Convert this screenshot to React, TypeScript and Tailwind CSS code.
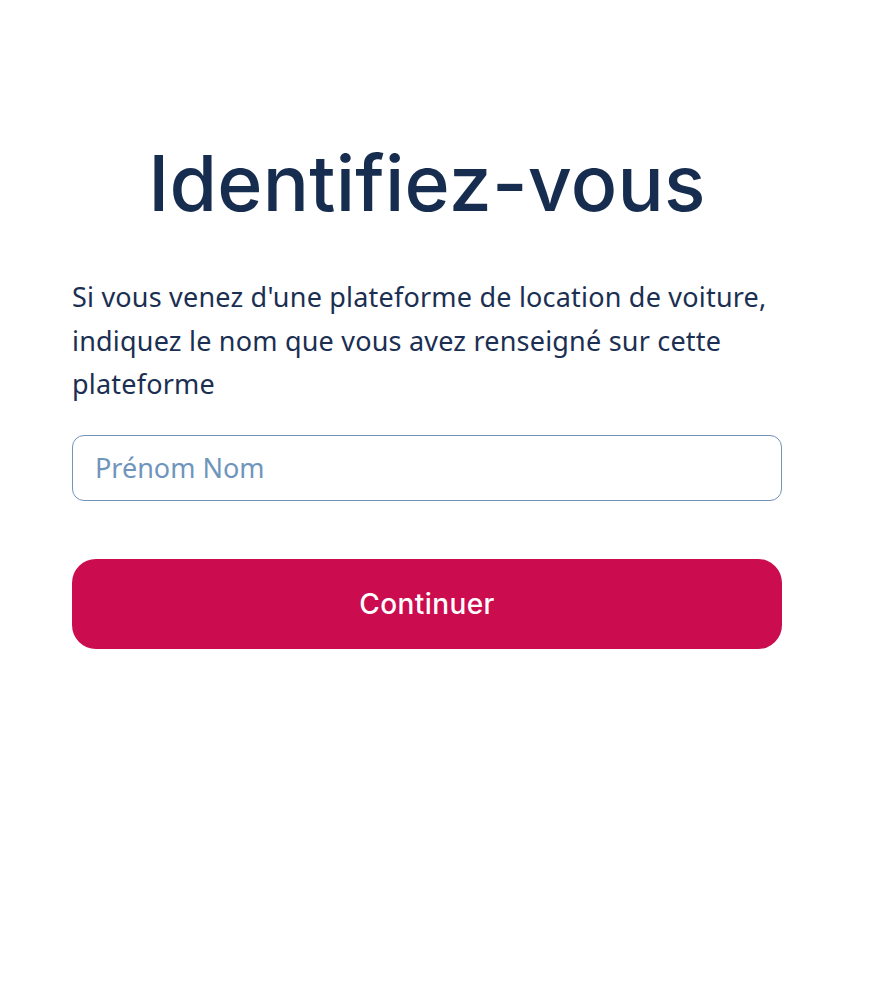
import React from "react";

const App: React.FC = () => {
  return (
    <div className="min-h-screen bg-white">
      <div className="ml-[72px] w-[710px] pt-[137px]">
        <h1 className="text-center font-['Inter',sans-serif] text-[77px] font-medium leading-[1.2] tracking-[0.2px] text-[#172d4f]">
          Identifiez-vous
        </h1>
        <p className="mt-[46px] font-['Noto_Sans',sans-serif] text-[27px] leading-[43.5px] tracking-[0.2px] text-[#1b2f52]">
          Si vous venez d'une plateforme de location de voiture, indiquez le nom que vous avez renseigné sur cette
          plateforme
        </p>
        <input
          type="text"
          placeholder="Prénom Nom"
          className="mt-[29px] block h-[66px] w-full rounded-[12px] border border-[#7393bb] px-[22px] font-['Noto_Sans',sans-serif] text-[27px] text-[#1b2f52] placeholder:text-[#6f95bd] outline-none"
        />
        <button className="mt-[58px] flex h-[90px] w-full items-center justify-center rounded-[24px] bg-[#cb0c4f] font-['Inter',sans-serif] text-[28px] font-medium tracking-[0.4px] text-white">
          Continuer
        </button>
      </div>
    </div>
  );
};

export default App;
